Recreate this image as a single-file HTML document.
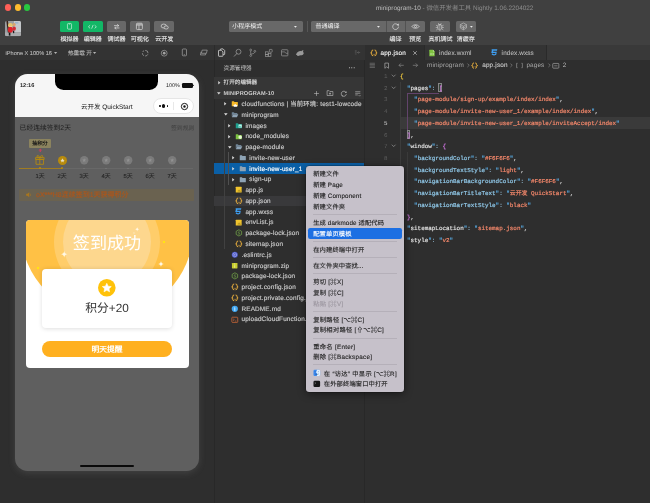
<!DOCTYPE html>
<html lang="zh-CN">
<head>
<meta charset="utf-8">
<title>miniprogram-10 - 微信开发者工具 Nightly 1.06.2204022</title>
<style>
html,body{margin:0;padding:0}
body{width:650px;height:503px;overflow:hidden;position:relative;background:#2e2e2e;font-family:"Liberation Sans",sans-serif;text-rendering:geometricPrecision;-webkit-font-smoothing:antialiased}
.a{position:absolute}
.t{position:absolute;white-space:pre;line-height:12px;height:12px}
svg{overflow:visible}
.k{color:#dedede}.k2{color:#8fc6e6}.q{color:#58abe4}.s{color:#f0866a}.p{color:#c8c8c8}.c{color:#8fb4cc}.b1{color:#ecc63e}.b2{color:#cc74dc}
.code{-webkit-text-stroke:0.22px currentColor}
</style>
</head>
<body>
<div id="root" class="a" style="left:0;top:0;width:650px;height:503px;overflow:hidden;will-change:transform">

<div class="a" style="left:0.00px;top:0.00px;width:650.00px;height:45.00px;background:#404040;"></div>
<div class="a" style="left:4.50px;top:4.35px;width:6.20px;height:6.20px;background:#fe5f57;border-radius:3.1px;"></div>
<div class="a" style="left:14.50px;top:4.35px;width:6.20px;height:6.20px;background:#febc2e;border-radius:3.1px;"></div>
<div class="a" style="left:24.30px;top:4.35px;width:6.20px;height:6.20px;background:#28c840;border-radius:3.1px;"></div>
<div class="t" style="left:376px;top:2.9px;font-size:6.4px;color:#8c8c8c"><span style="color:#bcbcbc">miniprogram-10</span> - 微信开发者工具 Nightly 1.06.2204022</div>
<svg class="a" style="left:5.4px;top:20.9px" width="16" height="15.2" viewBox="0 0 16 15.2">
<defs><clipPath id="av"><rect x="0" y="0" width="16" height="15.2" rx="1.6"/></clipPath><filter id="bl"><feGaussianBlur stdDeviation="0.45"/></filter></defs>
<g clip-path="url(#av)"><rect width="16" height="15.2" fill="#9b9ea1"/><rect x="9" width="7" height="11" fill="#c4c7ca"/><rect y="11.5" width="16" height="3.7" fill="#a9abad"/>
<g filter="url(#bl)"><path d="M1.4 0 H3 L4.2 11.4 H2.8 Z" fill="#3a2418"/><ellipse cx="5.4" cy="4.3" rx="2.4" ry="2.2" fill="#e9c46a"/><ellipse cx="9.2" cy="3.4" rx="1.5" ry="1.5" fill="#d8a46e"/><ellipse cx="5.6" cy="6" rx="1.2" ry="0.7" fill="#f6f0e4"/><rect x="10" y="1" width="3.4" height="1.6" fill="#9db4cc"/>
<ellipse cx="5.4" cy="8.8" rx="2.5" ry="3" fill="#e0202c"/><ellipse cx="9.3" cy="7.6" rx="1.6" ry="2.2" fill="#d42a32"/><rect x="3.8" y="11.6" width="1.6" height="3" fill="#141414"/><rect x="8" y="9.8" width="1.2" height="2.4" fill="#1c1c1c"/></g></g></svg>
<div class="a" style="left:59.60px;top:21.00px;width:19.60px;height:10.60px;background:#12b766;border-radius:1.6px;"></div>
<div class="t" style="top:33.70px;font-size:6px;color:#ececec;left:69.40px;transform:translateX(-50%);-webkit-text-stroke:0.1px;">模拟器</div>
<div class="a" style="left:83.00px;top:21.00px;width:19.60px;height:10.60px;background:#12b766;border-radius:1.6px;"></div>
<div class="t" style="top:33.70px;font-size:6px;color:#ececec;left:92.80px;transform:translateX(-50%);-webkit-text-stroke:0.1px;">编辑器</div>
<div class="a" style="left:106.60px;top:21.00px;width:19.60px;height:10.60px;background:#686868;border-radius:1.6px;"></div>
<div class="t" style="top:33.70px;font-size:6px;color:#ececec;left:116.40px;transform:translateX(-50%);-webkit-text-stroke:0.1px;">调试器</div>
<div class="a" style="left:130.00px;top:21.00px;width:19.60px;height:10.60px;background:#686868;border-radius:1.6px;"></div>
<div class="t" style="top:33.70px;font-size:6px;color:#ececec;left:139.80px;transform:translateX(-50%);-webkit-text-stroke:0.1px;">可视化</div>
<div class="a" style="left:154.40px;top:21.00px;width:19.60px;height:10.60px;background:#686868;border-radius:1.6px;"></div>
<div class="t" style="top:33.70px;font-size:6px;color:#ececec;left:164.20px;transform:translateX(-50%);-webkit-text-stroke:0.1px;">云开发</div>
<svg class="a" style="left:66.90px;top:23.00px" width="5" height="6.6" viewBox="0 0 10 13.2"><rect x="0.9" y="0.9" width="8.2" height="11.4" rx="2" fill="none" stroke="rgba(255,255,255,0.82)" stroke-width="1.35"/><path d="M3.6 2.6 H6.4" stroke="rgba(255,255,255,0.8)" stroke-width="1"/></svg>
<svg class="a" style="left:88.40px;top:24.50px" width="8.8" height="3.6" viewBox="0 0 20 8"><path d="M4.2 1 L1 4 L4.2 7 M15.8 1 L19 4 L15.8 7 M11.4 0.6 L8.6 7.4" fill="none" stroke="rgba(255,255,255,0.9)" stroke-width="1.5" stroke-linecap="round" stroke-linejoin="round"/></svg>
<svg class="a" style="left:112.65px;top:22.55px;" width="7.5" height="7.5" viewBox="0 0 16 16"><path d="M3 5.6 H12 M9.6 3.2 L12.2 5.6 L9.6 8 M13 10.6 H4 M6.4 8.2 L3.8 10.6 L6.4 13" fill="none" stroke="#e6e6e6" stroke-width="1.4" stroke-linecap="round" stroke-linejoin="round"/></svg>
<svg class="a" style="left:135.40px;top:21.90px;" width="8.8" height="8.8" viewBox="0 0 16 16"><rect x="2.6" y="2.2" width="10.8" height="11.6" rx="1.8" fill="none" stroke="#e2e2e2" stroke-width="1.25"/><path d="M2.6 5.6 H13.4 M7.2 5.6 V13.8" stroke="#e2e2e2" stroke-width="1.2"/><path d="M3.2 3 H12.8 V5 H3.2 Z" fill="rgba(226,226,226,0.55)"/></svg>
<svg class="a" style="left:159.50px;top:21.80px;" width="9.4" height="9.4" viewBox="0 0 16 16"><ellipse cx="6.4" cy="6.9" rx="4.5" ry="3.4" fill="none" stroke="#e2e2e2" stroke-width="1.15"/><ellipse cx="10.5" cy="9.3" rx="3.6" ry="2.7" fill="#686868" stroke="#e2e2e2" stroke-width="1.15"/></svg>
<div class="a" style="left:228.60px;top:21.00px;width:74.40px;height:10.60px;background:#686868;border-radius:1.6px;"></div>
<div class="t" style="top:21.40px;font-size:6px;color:#f2f2f2;left:232.20px;">小程序模式</div>
<svg class="a" style="left:293.95px;top:25.65px" width="2.9" height="1.9" viewBox="0 0 10 6"><path d="M0 0 H10 L5 6 Z" fill="#eaeaea"/></svg>
<div class="a" style="left:307.20px;top:21.00px;width:0.60px;height:10.60px;background:#575757;"></div>
<div class="a" style="left:311.00px;top:21.00px;width:114.00px;height:10.60px;background:#686868;border-radius:1.6px;"></div>
<div class="a" style="left:386.00px;top:21.00px;width:0.60px;height:10.60px;background:#525252;"></div>
<div class="a" style="left:405.20px;top:21.00px;width:0.60px;height:10.60px;background:#525252;"></div>
<div class="t" style="top:21.40px;font-size:6px;color:#f2f2f2;left:315.60px;">普通编译</div>
<svg class="a" style="left:376.55px;top:25.65px" width="2.9" height="1.9" viewBox="0 0 10 6"><path d="M0 0 H10 L5 6 Z" fill="#eaeaea"/></svg>
<svg class="a" style="left:391.20px;top:21.80px;" width="9.2" height="9.2" viewBox="0 0 16 16"><path d="M12.3 5.3 A5.1 5.1 0 1 0 13.1 8.6" fill="none" stroke="#e4e4e4" stroke-width="1.1" stroke-linecap="round"/><path d="M13.6 2.6 L13.2 6.4 L9.8 5.2 Z" fill="#e4e4e4"/></svg>
<svg class="a" style="left:410.90px;top:21.80px;" width="9" height="9" viewBox="0 0 16 16"><path d="M1.6 8 C4 4 12 4 14.4 8 C12 12 4 12 1.6 8 Z" fill="none" stroke="#e6e6e6" stroke-width="1.2"/><circle cx="8" cy="8" r="1.9" fill="none" stroke="#e6e6e6" stroke-width="1.2"/></svg>
<div class="t" style="top:33.70px;font-size:6px;color:#ececec;left:395.40px;transform:translateX(-50%);-webkit-text-stroke:0.1px;">编译</div>
<div class="t" style="top:33.70px;font-size:6px;color:#ececec;left:415.20px;transform:translateX(-50%);-webkit-text-stroke:0.1px;">预览</div>
<div class="a" style="left:430.40px;top:21.00px;width:19.60px;height:10.60px;background:#686868;border-radius:1.6px;"></div>
<div class="a" style="left:456.00px;top:21.00px;width:19.60px;height:10.60px;background:#686868;border-radius:1.6px;"></div>
<svg class="a" style="left:435.40px;top:21.50px;" width="9.6" height="9.6" viewBox="0 0 16 16"><path d="M8 4.2 C10.4 4.2 11.4 6 11.4 8.6 C11.4 11.6 10 13.4 8 13.4 C6 13.4 4.6 11.6 4.6 8.6 C4.6 6 5.6 4.2 8 4.2 Z" fill="none" stroke="#d2d2d2" stroke-width="0.95"/><path d="M8 4.4 V13.2 M6 4.6 Q8 6 10 4.6 M5.8 2.4 L6.9 4.1 M10.2 2.4 L9.1 4.1 M2.2 5.6 L4.8 7 M13.8 5.6 L11.2 7 M1.8 9.2 H4.6 M14.2 9.2 H11.4 M2.6 13 L5 11.2 M13.4 13 L11 11.2" stroke="#d2d2d2" stroke-width="0.9" fill="none" stroke-linecap="round"/></svg>
<svg class="a" style="left:459.20px;top:21.90px;" width="8.8" height="8.8" viewBox="0 0 16 16"><path d="M8 1.8 L13.6 4.8 L8 7.8 L2.4 4.8 Z" fill="none" stroke="#d2d2d2" stroke-width="0.95" stroke-linejoin="round"/><path d="M2.4 4.8 V11 L8 14.2 L13.6 11 V4.8 M2.4 8 L8 11 L13.6 8 M8 7.8 V14.2" fill="none" stroke="#d2d2d2" stroke-width="0.95" stroke-linejoin="round"/></svg>
<svg class="a" style="left:469.60px;top:25.60px" width="2.8" height="1.8" viewBox="0 0 10 6"><path d="M0 0 H10 L5 6 Z" fill="#eaeaea"/></svg>
<div class="t" style="top:33.70px;font-size:6px;color:#ececec;left:440.40px;transform:translateX(-50%);-webkit-text-stroke:0.1px;">真机调试</div>
<div class="t" style="top:33.70px;font-size:6px;color:#ececec;left:465.80px;transform:translateX(-50%);-webkit-text-stroke:0.1px;">清缓存</div>
<div class="a" style="left:0.00px;top:45.00px;width:365.00px;height:14.60px;background:#333333;"></div>
<div class="a" style="left:365.00px;top:45.00px;width:285.00px;height:14.60px;background:#393939;"></div>
<div class="t" style="top:47.50px;font-size:5.6px;color:#bababa;left:5.60px;-webkit-text-stroke:0.1px;">iPhone X 100% 16</div>
<svg class="a" style="left:53.60px;top:51.95px" width="3.2" height="2.1" viewBox="0 0 10 6"><path d="M0 0 H10 L5 6 Z" fill="#b4b4b4"/></svg>
<div class="t" style="top:47.50px;font-size:5.6px;color:#bababa;left:68.00px;-webkit-text-stroke:0.1px;">热重载 开</div>
<svg class="a" style="left:92.80px;top:51.95px" width="3.2" height="2.1" viewBox="0 0 10 6"><path d="M0 0 H10 L5 6 Z" fill="#b4b4b4"/></svg>
<svg class="a" style="left:140.80px;top:48.60px;" width="8.4" height="8.4" viewBox="0 0 16 16"><path d="M8 2.6 A5.4 5.4 0 0 1 13.4 8 M13 10.2 A5.4 5.4 0 0 1 8 13.4 M5.6 12.8 A5.4 5.4 0 0 1 2.6 8 M3.2 5.6 A5.4 5.4 0 0 1 5.8 3.1" fill="none" stroke="#a4a4a4" stroke-width="1.4"/></svg>
<svg class="a" style="left:160.40px;top:48.60px;" width="8.4" height="8.4" viewBox="0 0 16 16"><circle cx="8" cy="8" r="5.6" fill="none" stroke="#a4a4a4" stroke-width="1.3"/><circle cx="8" cy="8" r="2.6" fill="#a4a4a4"/></svg>
<svg class="a" style="left:179.80px;top:48.40px;" width="8.8" height="8.8" viewBox="0 0 16 16"><rect x="4.2" y="1.8" width="7.6" height="12.4" rx="1.6" fill="none" stroke="#a4a4a4" stroke-width="1.3"/><path d="M6.8 12 H9.2" stroke="#a4a4a4" stroke-width="1"/></svg>
<svg class="a" style="left:199.10px;top:48.10px;" width="9.4" height="9.4" viewBox="0 0 16 16"><path d="M5.4 3.6 H14 L12.6 9 H4 Z" fill="none" stroke="#a4a4a4" stroke-width="1.2" stroke-linejoin="round"/><path d="M3.6 6.4 L2.4 11.8 H11 L11.6 9.2" fill="none" stroke="#a4a4a4" stroke-width="1.2" stroke-linejoin="round"/></svg>
<div class="a" style="left:213.70px;top:59.60px;width:0.70px;height:444.00px;background:#282828;"></div>
<div class="a" style="left:213.70px;top:45.00px;width:0.70px;height:14.60px;background:#2b2b2b;"></div>
<svg class="a" style="left:217.00px;top:48.00px;" width="9.2" height="9.2" viewBox="0 0 16 16"><path d="M6 3.6 V2.4 Q6 1.6 6.8 1.6 H10.6 L13.4 4.4 V10.6 Q13.4 11.4 12.6 11.4 H10.8" fill="none" stroke="#e4e4e4" stroke-width="1.3" stroke-linejoin="round"/><path d="M3.4 4 H7.6 L10.4 6.8 V13.6 Q10.4 14.4 9.6 14.4 H3.4 Q2.6 14.4 2.6 13.6 V4.8 Q2.6 4 3.4 4 Z" fill="none" stroke="#e4e4e4" stroke-width="1.3" stroke-linejoin="round"/></svg>
<svg class="a" style="left:233.10px;top:47.70px;" width="9.4" height="9.4" viewBox="0 0 16 16"><circle cx="9.4" cy="6.4" r="4.2" fill="none" stroke="#9a9a9a" stroke-width="1.3"/><path d="M6.4 9.6 L2.2 14" stroke="#9a9a9a" stroke-width="1.4" stroke-linecap="round"/></svg>
<svg class="a" style="left:248.20px;top:47.70px;" width="9.4" height="9.4" viewBox="0 0 16 16"><circle cx="4.6" cy="3.4" r="1.6" fill="none" stroke="#9a9a9a" stroke-width="1.1"/><circle cx="4.6" cy="12.8" r="1.6" fill="none" stroke="#9a9a9a" stroke-width="1.1"/><circle cx="11.6" cy="5.6" r="1.6" fill="none" stroke="#9a9a9a" stroke-width="1.1"/><path d="M4.6 5 V11.2 M11.6 7.2 Q11.6 9.6 4.8 10.6" fill="none" stroke="#9a9a9a" stroke-width="1.1"/></svg>
<svg class="a" style="left:263.70px;top:47.60px;" width="9.6" height="9.6" viewBox="0 0 16 16"><rect x="2.4" y="6.4" width="4.6" height="4.6" fill="none" stroke="#9a9a9a" stroke-width="1.1"/><rect x="2.4" y="11" width="4.6" height="3" fill="none" stroke="#9a9a9a" stroke-width="1.1"/><rect x="7" y="9.4" width="4.6" height="4.6" fill="none" stroke="#9a9a9a" stroke-width="1.1"/><rect x="9" y="2.4" width="4.6" height="4.6" rx="0.6" fill="none" stroke="#9a9a9a" stroke-width="1.1"/></svg>
<svg class="a" style="left:280.30px;top:47.70px;" width="9.4" height="9.4" viewBox="0 0 16 16"><rect x="2.6" y="3" width="10.8" height="10.4" rx="1" fill="none" stroke="#9a9a9a" stroke-width="1.2"/><path d="M2.6 6.6 H8 L10 9 H13.4" fill="none" stroke="#9a9a9a" stroke-width="1.1"/></svg>
<svg class="a" style="left:295.00px;top:47.60px;" width="10" height="10" viewBox="0 0 16 16"><path d="M1.6 10.6 C3 6.6 6.4 4.4 10 5 C11 3.6 12.6 3.2 13.8 3.6 C12.8 4.4 12.6 5.4 13 6.4 C14.4 7.6 14.2 9.8 12.6 10.6 C10.6 11.8 7.6 11.2 6 12.4 C4.6 13.2 3 12.6 3.6 11.2 C2.8 11.4 2 11.2 1.6 10.6 Z" fill="#9a9a9a"/></svg>
<svg class="a" style="left:353.50px;top:49.10px;" width="7" height="7" viewBox="0 0 16 16"><path d="M3 2.4 V13.6 M5 2.4 V13.6" stroke="#777" stroke-width="1" stroke-dasharray="1.6 1"/><path d="M8 8 H14 M10.4 5.6 L8 8 L10.4 10.4" fill="none" stroke="#777" stroke-width="1.1"/></svg>
<div class="a" style="left:364.30px;top:59.60px;width:0.70px;height:444.00px;background:#282828;"></div>
<div class="a" style="left:365.20px;top:45.00px;width:58.80px;height:14.60px;background:#2e2e2e;"></div>
<div class="a" style="left:424.00px;top:45.00px;width:0.60px;height:14.60px;background:#2a2a2a;"></div>
<div class="a" style="left:424.60px;top:45.00px;width:61.00px;height:14.60px;background:#343434;"></div>
<div class="a" style="left:485.60px;top:45.00px;width:0.60px;height:14.60px;background:#2a2a2a;"></div>
<div class="a" style="left:486.20px;top:45.00px;width:60.20px;height:14.60px;background:#343434;"></div>
<div class="a" style="left:546.40px;top:45.00px;width:0.60px;height:14.60px;background:#2a2a2a;"></div>
<svg class="a" style="left:369.70px;top:48.70px;" width="7.8" height="7.8" viewBox="0 0 16 16"><path d="M5.8 2.2 Q3.6 2.2 3.6 4.2 V6 Q3.6 8 1.4 8 Q3.6 8 3.6 10 V11.8 Q3.6 13.8 5.8 13.8 M10.2 2.2 Q12.4 2.2 12.4 4.2 V6 Q12.4 8 14.6 8 Q12.4 8 12.4 10 V11.8 Q12.4 13.8 10.2 13.8" fill="none" stroke="#f2b53f" stroke-width="2" stroke-linecap="round" stroke-linejoin="round"/><circle cx="6.6" cy="10.6" r="0.95" fill="#f2b53f"/><circle cx="9.4" cy="10.6" r="0.95" fill="#f2b53f"/></svg>
<div class="t" style="top:47.50px;font-size:6.36px;color:#f4f4f4;letter-spacing:0.2px;left:380.40px;-webkit-text-stroke:0.12px;">app.json</div>
<svg class="a" style="left:412.40px;top:49.60px;" width="6" height="6" viewBox="0 0 16 16"><path d="M4 4 L12 12 M12 4 L4 12" stroke="#e0e0e0" stroke-width="1.5" stroke-linecap="round"/></svg>
<svg class="a" style="left:428.10px;top:48.50px;" width="8.2" height="8.2" viewBox="0 0 16 16"><path d="M3.4 1.6 H9.6 L13 5 V13.4 Q13 14.4 12 14.4 H3.4 Q2.6 14.4 2.6 13.4 V2.6 Q2.6 1.6 3.4 1.6 Z" fill="#7fc241"/><path d="M9.6 1.6 V5 H13 Z" fill="#c7e9a0"/><path d="M6.6 8 L5 9.8 L6.6 11.6 M9.4 8 L11 9.8 L9.4 11.6" fill="none" stroke="#fff" stroke-width="1.1"/></svg>
<div class="t" style="top:47.50px;font-size:6.36px;color:#b6b6b6;letter-spacing:0.12px;left:439.00px;-webkit-text-stroke:0.1px;">index.wxml</div>
<svg class="a" style="left:489.80px;top:48.20px;" width="8.8" height="8.8" viewBox="0 0 16 16"><path d="M3.2 2 H13.6 L13 4.6 H6.4 L6 6.4 H12.6 L11.6 11.8 L7.6 13.4 L3.4 11.8 L3.8 9.6 H6 L5.8 10.4 L7.8 11.2 L9.8 10.4 L10.2 8.6 H2.6 L3.6 4.2 Z" fill="#3f9ef0" transform="translate(-0.3 0.3)"/></svg>
<div class="t" style="top:47.50px;font-size:6.36px;color:#b6b6b6;letter-spacing:0.12px;left:501.60px;-webkit-text-stroke:0.1px;">index.wxss</div>
<div class="a" style="left:15.0px;top:74.0px;width:183.6px;height:397.0px;border-radius:12.5px;background:#5f5f5f;overflow:hidden;box-shadow:0 2px 7px rgba(150,150,150,0.2)">
<div class="a" style="left:0.00px;top:0.00px;width:183.60px;height:43.00px;background:#f6f6f6;"></div>
<div class="a" style="left:40.0px;top:-4px;width:103px;height:20px;background:#000;border-radius:0 0 8.5px 8.5px"></div>
<div class="t" style="top:6.10px;font-size:5.6px;color:#1a1a1a;font-weight:700;left:5.00px;">12:16</div>
<div class="t" style="top:6.30px;font-size:5.4px;color:#1a1a1a;left:151.00px;">100%</div>
<div class="a" style="left:167.00px;top:9.20px;width:10.60px;height:4.60px;background:#111;border-radius:1.2px;"></div>
<div class="a" style="left:177.80px;top:10.60px;width:1.00px;height:1.80px;background:#111;border-radius:0.5px;"></div>
<div class="t" style="top:27.50px;font-size:6.5px;color:#151515;left:91.80px;transform:translateX(-50%);">云开发 QuickStart</div>
<div class="a" style="left:138.0px;top:24.0px;width:41px;height:16px;box-sizing:border-box;border:0.6px solid #e6e6e6;border-radius:8px;background:#fff"></div>
<div class="a" style="left:144.20px;top:31.30px;width:1.60px;height:1.60px;background:#111;border-radius:0.8px;"></div>
<div class="a" style="left:147.10px;top:30.40px;width:3.20px;height:3.20px;background:#111;border-radius:1.6px;"></div>
<div class="a" style="left:151.60px;top:31.30px;width:1.60px;height:1.60px;background:#111;border-radius:0.8px;"></div>
<svg class="a" style="left:164.50px;top:27.50px;" width="9" height="9" viewBox="0 0 16 16"><circle cx="8" cy="8" r="5.6" fill="none" stroke="#111" stroke-width="1.7"/><circle cx="8" cy="8" r="2.1" fill="#111"/></svg>
<div class="a" style="left:158.40px;top:28.00px;width:0.40px;height:8.00px;background:#e8e8e8;"></div>
<div class="t" style="top:48.90px;font-size:6.8px;color:#1c1c1c;font-weight:500;left:4.60px;">已经连续签到2天</div>
<div class="t" style="top:48.90px;font-size:5.85px;color:#3d3d3d;left:156.00px;">签到规则</div>
<div class="a" style="left:14.00px;top:65.00px;width:22.00px;height:8.60px;background:#8b835e;border-radius:1px;"></div>
<div class="t" style="top:64.20px;font-size:5.2px;color:#161616;font-weight:700;left:25.00px;transform:translateX(-50%);">抽积分</div>
<svg class="a" style="left:22.70px;top:73.50px;" width="4.6" height="4.6" viewBox="0 0 16 16"><path d="M8 1.5 L14.5 8.5 H10.4 V14 H5.6 V8.5 H1.5 Z" fill="#c2405c"/></svg>
<svg class="a" style="left:19.20px;top:79.80px;" width="11.6" height="11.6" viewBox="0 0 16 16"><path d="M2.8 7.4 H13.2 V14.2 H2.8 Z M2 5 H14 V7.4 H2 Z M8 5 V14.2 M8 4.8 C6.6 1 2.8 1.8 4.2 3.8 Q5.4 5 8 4.8 C9.4 1 13.2 1.8 11.8 3.8 Q10.6 5 8 4.8" fill="none" stroke="#b88b0c" stroke-width="1.15" stroke-linejoin="round"/></svg>
<svg class="a" style="left:42.50px;top:81.50px;" width="9" height="9" viewBox="0 0 16 16"><circle cx="8" cy="8" r="8" fill="#b88b0c"/><path d="M8 4.2 L9.1 6.7 L11.8 6.9 L9.7 8.7 L10.4 11.4 L8 9.9 L5.6 11.4 L6.3 8.7 L4.2 6.9 L6.9 6.7 Z" fill="#e8e0c8"/></svg>
<svg class="a" style="left:64.80px;top:81.80px;" width="8.4" height="8.4" viewBox="0 0 16 16"><circle cx="8" cy="8" r="8" fill="#7b7b7b"/><path d="M8 4.2 L9.1 6.7 L11.8 6.9 L9.7 8.7 L10.4 11.4 L8 9.9 L5.6 11.4 L6.3 8.7 L4.2 6.9 L6.9 6.7 Z" fill="#929292"/></svg>
<svg class="a" style="left:86.80px;top:81.80px;" width="8.4" height="8.4" viewBox="0 0 16 16"><circle cx="8" cy="8" r="8" fill="#7b7b7b"/><path d="M8 4.2 L9.1 6.7 L11.8 6.9 L9.7 8.7 L10.4 11.4 L8 9.9 L5.6 11.4 L6.3 8.7 L4.2 6.9 L6.9 6.7 Z" fill="#929292"/></svg>
<svg class="a" style="left:108.80px;top:81.80px;" width="8.4" height="8.4" viewBox="0 0 16 16"><circle cx="8" cy="8" r="8" fill="#7b7b7b"/><path d="M8 4.2 L9.1 6.7 L11.8 6.9 L9.7 8.7 L10.4 11.4 L8 9.9 L5.6 11.4 L6.3 8.7 L4.2 6.9 L6.9 6.7 Z" fill="#929292"/></svg>
<svg class="a" style="left:130.80px;top:81.80px;" width="8.4" height="8.4" viewBox="0 0 16 16"><circle cx="8" cy="8" r="8" fill="#7b7b7b"/><path d="M8 4.2 L9.1 6.7 L11.8 6.9 L9.7 8.7 L10.4 11.4 L8 9.9 L5.6 11.4 L6.3 8.7 L4.2 6.9 L6.9 6.7 Z" fill="#929292"/></svg>
<svg class="a" style="left:152.80px;top:81.80px;" width="8.4" height="8.4" viewBox="0 0 16 16"><circle cx="8" cy="8" r="8" fill="#7b7b7b"/><path d="M8 4.2 L9.1 6.7 L11.8 6.9 L9.7 8.7 L10.4 11.4 L8 9.9 L5.6 11.4 L6.3 8.7 L4.2 6.9 L6.9 6.7 Z" fill="#929292"/></svg>
<div class="a" style="left:4.00px;top:94.00px;width:43.00px;height:1.00px;background:#a07c22;"></div>
<div class="a" style="left:47.00px;top:94.00px;width:130.60px;height:1.00px;background:#686868;"></div>
<div class="a" style="left:23.90px;top:93.30px;width:2.20px;height:2.20px;background:#b88b0c;border-radius:1.1px;"></div>
<div class="a" style="left:45.90px;top:93.30px;width:2.20px;height:2.20px;background:#b88b0c;border-radius:1.1px;"></div>
<div class="a" style="left:68.20px;top:93.60px;width:1.60px;height:1.60px;background:#757575;border-radius:0.8px;"></div>
<div class="a" style="left:90.20px;top:93.60px;width:1.60px;height:1.60px;background:#757575;border-radius:0.8px;"></div>
<div class="a" style="left:112.20px;top:93.60px;width:1.60px;height:1.60px;background:#757575;border-radius:0.8px;"></div>
<div class="a" style="left:134.20px;top:93.60px;width:1.60px;height:1.60px;background:#757575;border-radius:0.8px;"></div>
<div class="a" style="left:156.20px;top:93.60px;width:1.60px;height:1.60px;background:#757575;border-radius:0.8px;"></div>
<div class="t" style="top:96.90px;font-size:5.9px;color:#252525;left:25.00px;transform:translateX(-50%);-webkit-text-stroke:0.12px;">1天</div>
<div class="t" style="top:96.90px;font-size:5.9px;color:#252525;left:47.00px;transform:translateX(-50%);-webkit-text-stroke:0.12px;">2天</div>
<div class="t" style="top:96.90px;font-size:5.9px;color:#252525;left:69.00px;transform:translateX(-50%);-webkit-text-stroke:0.12px;">3天</div>
<div class="t" style="top:96.90px;font-size:5.9px;color:#252525;left:91.00px;transform:translateX(-50%);-webkit-text-stroke:0.12px;">4天</div>
<div class="t" style="top:96.90px;font-size:5.9px;color:#252525;left:113.00px;transform:translateX(-50%);-webkit-text-stroke:0.12px;">5天</div>
<div class="t" style="top:96.90px;font-size:5.9px;color:#252525;left:135.00px;transform:translateX(-50%);-webkit-text-stroke:0.12px;">6天</div>
<div class="t" style="top:96.90px;font-size:5.9px;color:#252525;left:157.00px;transform:translateX(-50%);-webkit-text-stroke:0.12px;">7天</div>
<div class="a" style="left:4.00px;top:114.60px;width:175.40px;height:12.00px;background:#6a6250;border-radius:0.8px;"></div>
<svg class="a" style="left:10.40px;top:116.80px;" width="7.6" height="7.6" viewBox="0 0 16 16"><path d="M2.4 6 H5 L9 2.8 V13.2 L5 10 H2.4 Z" fill="#a8761e"/><path d="M11 5.4 Q13 8 11 10.6" fill="none" stroke="#a8761e" stroke-width="1.2"/></svg>
<div class="t" style="top:116.10px;font-size:7px;color:#ae561a;left:21.00px;-webkit-text-stroke:0.15px;">oX***H8连续签到1天获得积分</div>
<div class="a" style="left:10.600000000000001px;top:146.0px;width:163.0px;height:147.6px;border-radius:4px;background:#fff;overflow:hidden">
<div class="a" style="left:-4.20px;top:-75.00px;width:171.20px;height:171.20px;background:#ffc145;border-radius:85.6px;"></div>
<div class="a" style="left:28.40px;top:-31.00px;width:106.00px;height:106.00px;background:#ffcd6a;border-radius:53px;"></div>
<div class="a" style="left:37.40px;top:-22.00px;width:88.00px;height:88.00px;background:#fdd78e;border-radius:44px;"></div>
<div class="t" style="top:18.10px;font-size:17.1px;color:#ffffff;font-weight:500;left:81.40px;transform:translateX(-50%);line-height:22px;height:22px;margin-top:-5px;">签到成功</div>
<svg class="a" style="left:35.20px;top:31.40px;" width="6.4" height="6.4" viewBox="0 0 16 16"><path d="M8 0 C8.6 5 11 7.4 16 8 C11 8.6 8.6 11 8 16 C7.4 11 5 8.6 0 8 C5 7.4 7.4 5 8 0 Z" fill="#fff8e6"/></svg>
<svg class="a" style="left:109.80px;top:6.80px;" width="4.4" height="4.4" viewBox="0 0 16 16"><path d="M8 0 C8.6 5 11 7.4 16 8 C11 8.6 8.6 11 8 16 C7.4 11 5 8.6 0 8 C5 7.4 7.4 5 8 0 Z" fill="#fff8e6"/></svg>
<svg class="a" style="left:107.40px;top:12.20px;" width="2" height="2" viewBox="0 0 16 16"><path d="M8 0 C8.6 5 11 7.4 16 8 C11 8.6 8.6 11 8 16 C7.4 11 5 8.6 0 8 C5 7.4 7.4 5 8 0 Z" fill="#fff3d6"/></svg>
<svg class="a" style="left:132.00px;top:40.60px;" width="6" height="6" viewBox="0 0 16 16"><path d="M8 0 C8.6 5 11 7.4 16 8 C11 8.6 8.6 11 8 16 C7.4 11 5 8.6 0 8 C5 7.4 7.4 5 8 0 Z" fill="#fff8e6"/></svg>
<div class="a" style="left:11.20px;top:46.80px;width:2.30px;height:2.30px;background:#fff000;border-radius:1.15px;"></div>
<div class="a" style="left:137.30px;top:20.50px;width:2.30px;height:2.30px;background:#fff000;border-radius:1.15px;"></div>
<div class="a" style="left:16.80px;top:49.00px;width:129.20px;height:58.60px;background:#fff;border-radius:4px;box-shadow:0 0.8px 4px rgba(0,0,0,0.13);"></div>
<svg class="a" style="left:72.60px;top:58.80px;" width="17.6" height="17.6" viewBox="0 0 16 16"><circle cx="8" cy="8" r="8" fill="#ffc20a"/><path d="M8 3.9 L9.25 6.55 L12.1 6.9 L10 8.85 L10.55 11.7 L8 10.3 L5.45 11.7 L6 8.85 L3.9 6.9 L6.75 6.55 Z" fill="#fff" stroke="#fff" stroke-width="0.5" stroke-linejoin="round"/></svg>
<div class="t" style="top:81.90px;font-size:11.8px;color:#333;left:81.40px;transform:translateX(-50%);line-height:16px;height:16px;margin-top:-2px;">积分+20</div>
<div class="a" style="left:16.40px;top:120.60px;width:129.60px;height:16.40px;background:#ffb01f;border-radius:8.2px;"></div>
<div class="t" style="top:123.90px;font-size:7.8px;color:#fff;font-weight:700;left:81.40px;transform:translateX(-50%);">明天提醒</div>
</div>
<div class="a" style="left:64.60px;top:390.80px;width:54.20px;height:2.00px;background:#0a0a0a;border-radius:1px;"></div>
</div>
<div class="t" style="top:62.90px;font-size:5.6px;color:#cbcbcb;left:223.60px;">资源管理器</div>
<div class="t" style="top:63.10px;font-size:7px;color:#b0b0b0;font-weight:700;left:352.00px;transform:translateX(-50%);">···</div>
<div class="a" style="left:214.40px;top:77.00px;width:150.00px;height:10.60px;background:#363636;"></div>
<div class="a" style="left:214.40px;top:87.60px;width:150.00px;height:0.50px;background:#2a2a2a;"></div>
<div class="a" style="left:214.40px;top:88.10px;width:150.00px;height:10.60px;background:#363636;"></div>
<svg class="a" style="left:217.90px;top:80.50px" width="2.60" height="3.60" viewBox="0 0 6 10"><path d="M0 0 L6 5 L0 10 Z" fill="#d6d6d6"/></svg>
<div class="t" style="top:77.30px;font-size:5.6px;color:#cfcfcf;font-weight:700;left:223.60px;">打开的编辑器</div>
<svg class="a" style="left:217.40px;top:92.10px" width="3.60" height="2.60" viewBox="0 0 10 6"><path d="M0 0 H10 L5 6 Z" fill="#d6d6d6"/></svg>
<div class="t" style="top:88.40px;font-size:5.6px;color:#cfcfcf;font-weight:700;letter-spacing:0.1px;left:223.60px;">MINIPROGRAM-10</div>
<svg class="a" style="left:313.10px;top:89.90px;" width="7" height="7" viewBox="0 0 16 16"><path d="M8 2.4 V13.6 M2.4 8 H13.6" stroke="#c2c2c2" stroke-width="1.3"/></svg>
<svg class="a" style="left:326.00px;top:89.40px;" width="8" height="8" viewBox="0 0 16 16"><path d="M2.2 3.4 H6.4 L7.8 5 H13.8 V13 H2.2 Z" fill="none" stroke="#c2c2c2" stroke-width="1.2" stroke-linejoin="round"/><path d="M8 7 V11.4 M5.8 9.2 H10.2" stroke="#c2c2c2" stroke-width="1.2"/></svg>
<svg class="a" style="left:340.20px;top:89.60px;" width="7.6" height="7.6" viewBox="0 0 16 16"><path d="M12.8 5.4 A5.4 5.4 0 1 0 13.4 8.6" fill="none" stroke="#c2c2c2" stroke-width="1.3"/><path d="M13.8 2.6 L13.4 6.2 L10 5.4 Z" fill="#c2c2c2"/><path d="M3.2 10.6 A5.4 5.4 0 0 0 6 13" fill="none" stroke="#c2c2c2" stroke-width="1.3"/></svg>
<svg class="a" style="left:353.80px;top:89.60px;" width="7.6" height="7.6" viewBox="0 0 16 16"><path d="M2.6 3.6 H13.4 M2.6 7 H13.4 M2.6 10.4 H8 M10 11 L11.8 13 L13.6 11" fill="none" stroke="#c2c2c2" stroke-width="1.2"/></svg>
<div class="a" style="left:214.40px;top:163.24px;width:150.00px;height:10.77px;background:#0a5fa6;"></div>
<div class="a" style="left:214.40px;top:195.55px;width:150.00px;height:10.77px;background:#39393b;"></div>
<div class="a" style="left:223.90px;top:120.16px;width:0.50px;height:129.24px;background:#414141;"></div>
<div class="a" style="left:227.80px;top:152.47px;width:0.50px;height:32.31px;background:#505050;"></div>
<svg class="a" style="left:224.30px;top:102.21px" width="2.60" height="3.60" viewBox="0 0 6 10"><path d="M0 0 L6 5 L0 10 Z" fill="#e0e0e0"/></svg>
<svg class="a" style="left:231.00px;top:100.21px;" width="7.6" height="7.6" viewBox="0 0 16 16"><path d="M1.6 3.4 Q1.6 2.6 2.4 2.6 H6 L7.4 4.2 H13.6 Q14.4 4.2 14.4 5 V12.6 Q14.4 13.4 13.6 13.4 H2.4 Q1.6 13.4 1.6 12.6 Z" fill="#f7b928"/></svg>
<svg class="a" style="left:233.40px;top:102.61px;" width="4.6" height="4.6" viewBox="0 0 16 16"><path d="M4 13 A3.4 3.4 0 0 1 4.2 6.4 A4.2 4.2 0 0 1 12 6.8 A3 3 0 0 1 12 13 Z" fill="#fff"/></svg>
<div class="t" style="top:99.01px;font-size:6.36px;color:#cccccc;letter-spacing:0.17px;left:241.50px;-webkit-text-stroke:0.15px;">cloudfunctions | 当前环境: test1-lowcode</div>
<svg class="a" style="left:223.80px;top:113.48px" width="3.60" height="2.60" viewBox="0 0 10 6"><path d="M0 0 H10 L5 6 Z" fill="#e0e0e0"/></svg>
<svg class="a" style="left:231.00px;top:110.98px;" width="7.6" height="7.6" viewBox="0 0 16 16"><path d="M1.6 3.4 Q1.6 2.6 2.4 2.6 H6 L7.4 4.2 H12.6 Q13.4 4.2 13.4 5 V6.2 H4.4 L1.6 12 Z" fill="#6f8496"/><path d="M4.4 6.8 H15.4 L12.6 13.4 H1.8 Z" fill="#8ea3b5"/></svg>
<div class="t" style="top:109.78px;font-size:6.36px;color:#cccccc;letter-spacing:0.17px;left:241.50px;-webkit-text-stroke:0.15px;">miniprogram</div>
<svg class="a" style="left:228.20px;top:123.75px" width="2.60" height="3.60" viewBox="0 0 6 10"><path d="M0 0 L6 5 L0 10 Z" fill="#e0e0e0"/></svg>
<svg class="a" style="left:234.90px;top:121.75px;" width="7.6" height="7.6" viewBox="0 0 16 16"><path d="M1.6 3.4 Q1.6 2.6 2.4 2.6 H6 L7.4 4.2 H13.6 Q14.4 4.2 14.4 5 V12.6 Q14.4 13.4 13.6 13.4 H2.4 Q1.6 13.4 1.6 12.6 Z" fill="#1f9e8e"/></svg>
<svg class="a" style="left:237.70px;top:124.34px;" width="4.4" height="4.4" viewBox="0 0 16 16"><rect x="2" y="2" width="12" height="12" rx="1.4" fill="#b8f0e4"/><path d="M3 12 L6.6 7.6 L9 10.4 L10.6 8.8 L13 12 Z" fill="#1f9e8e"/></svg>
<div class="t" style="top:120.55px;font-size:6.36px;color:#cccccc;letter-spacing:0.17px;left:245.40px;-webkit-text-stroke:0.15px;">images</div>
<svg class="a" style="left:228.20px;top:134.51px" width="2.60" height="3.60" viewBox="0 0 6 10"><path d="M0 0 L6 5 L0 10 Z" fill="#e0e0e0"/></svg>
<svg class="a" style="left:234.90px;top:132.51px;" width="7.6" height="7.6" viewBox="0 0 16 16"><path d="M1.6 3.4 Q1.6 2.6 2.4 2.6 H6 L7.4 4.2 H13.6 Q14.4 4.2 14.4 5 V12.6 Q14.4 13.4 13.6 13.4 H2.4 Q1.6 13.4 1.6 12.6 Z" fill="#7dc242"/></svg>
<svg class="a" style="left:238.00px;top:135.31px;" width="4.4" height="4.4" viewBox="0 0 16 16"><path d="M8 1 L14 4.6 V11.4 L8 15 L2 11.4 V4.6 Z" fill="#e8f7d6"/></svg>
<div class="t" style="top:131.31px;font-size:6.36px;color:#cccccc;letter-spacing:0.17px;left:245.40px;-webkit-text-stroke:0.15px;">node_modules</div>
<svg class="a" style="left:227.70px;top:145.78px" width="3.60" height="2.60" viewBox="0 0 10 6"><path d="M0 0 H10 L5 6 Z" fill="#e0e0e0"/></svg>
<svg class="a" style="left:234.90px;top:143.28px;" width="7.6" height="7.6" viewBox="0 0 16 16"><path d="M1.6 3.4 Q1.6 2.6 2.4 2.6 H6 L7.4 4.2 H12.6 Q13.4 4.2 13.4 5 V6.2 H4.4 L1.6 12 Z" fill="#6f8496"/><path d="M4.4 6.8 H15.4 L12.6 13.4 H1.8 Z" fill="#8ea3b5"/></svg>
<div class="t" style="top:142.08px;font-size:6.36px;color:#cccccc;letter-spacing:0.17px;left:245.40px;-webkit-text-stroke:0.15px;">page-module</div>
<svg class="a" style="left:232.10px;top:156.05px" width="2.60" height="3.60" viewBox="0 0 6 10"><path d="M0 0 L6 5 L0 10 Z" fill="#e0e0e0"/></svg>
<svg class="a" style="left:238.80px;top:154.05px;" width="7.6" height="7.6" viewBox="0 0 16 16"><path d="M1.6 3.4 Q1.6 2.6 2.4 2.6 H6 L7.4 4.2 H13.6 Q14.4 4.2 14.4 5 V12.6 Q14.4 13.4 13.6 13.4 H2.4 Q1.6 13.4 1.6 12.6 Z" fill="#8ea3b5"/></svg>
<div class="t" style="top:152.85px;font-size:6.36px;color:#cccccc;letter-spacing:0.17px;left:249.30px;-webkit-text-stroke:0.15px;">invite-new-user</div>
<svg class="a" style="left:232.10px;top:166.82px" width="2.60" height="3.60" viewBox="0 0 6 10"><path d="M0 0 L6 5 L0 10 Z" fill="#e0e0e0"/></svg>
<svg class="a" style="left:238.80px;top:164.82px;" width="7.6" height="7.6" viewBox="0 0 16 16"><path d="M1.6 3.4 Q1.6 2.6 2.4 2.6 H6 L7.4 4.2 H13.6 Q14.4 4.2 14.4 5 V12.6 Q14.4 13.4 13.6 13.4 H2.4 Q1.6 13.4 1.6 12.6 Z" fill="#8ea3b5"/></svg>
<div class="t" style="top:163.62px;font-size:6.36px;color:#ffffff;letter-spacing:0.17px;left:249.30px;-webkit-text-stroke:0.15px;">invite-new-user_1</div>
<svg class="a" style="left:232.10px;top:177.59px" width="2.60" height="3.60" viewBox="0 0 6 10"><path d="M0 0 L6 5 L0 10 Z" fill="#e0e0e0"/></svg>
<svg class="a" style="left:238.80px;top:175.59px;" width="7.6" height="7.6" viewBox="0 0 16 16"><path d="M1.6 3.4 Q1.6 2.6 2.4 2.6 H6 L7.4 4.2 H13.6 Q14.4 4.2 14.4 5 V12.6 Q14.4 13.4 13.6 13.4 H2.4 Q1.6 13.4 1.6 12.6 Z" fill="#8ea3b5"/></svg>
<div class="t" style="top:174.39px;font-size:6.36px;color:#cccccc;letter-spacing:0.17px;left:249.30px;-webkit-text-stroke:0.15px;">sign-up</div>
<svg class="a" style="left:235.00px;top:186.47px;" width="7.4" height="7.4" viewBox="0 0 16 16"><rect x="1.6" y="1.8" width="12.8" height="12.4" rx="0.8" fill="#f2c52e"/><path d="M7.2 8.4 V11.4 Q7.2 12.4 6.2 12.4 M11.6 8.8 Q9.6 8 9.6 9.4 Q9.6 10.2 10.6 10.5 Q11.8 10.9 11.6 11.8 Q11.2 12.8 9.4 12.1" fill="none" stroke="#6b5a10" stroke-width="0.9"/></svg>
<div class="t" style="top:185.16px;font-size:6.36px;color:#cccccc;letter-spacing:0.17px;left:245.40px;-webkit-text-stroke:0.15px;">app.js</div>
<svg class="a" style="left:234.80px;top:197.03px;" width="7.8" height="7.8" viewBox="0 0 16 16"><path d="M5.8 2.2 Q3.6 2.2 3.6 4.2 V6 Q3.6 8 1.4 8 Q3.6 8 3.6 10 V11.8 Q3.6 13.8 5.8 13.8 M10.2 2.2 Q12.4 2.2 12.4 4.2 V6 Q12.4 8 14.6 8 Q12.4 8 12.4 10 V11.8 Q12.4 13.8 10.2 13.8" fill="none" stroke="#f2b53f" stroke-width="2" stroke-linecap="round" stroke-linejoin="round"/><circle cx="6.6" cy="10.6" r="0.95" fill="#f2b53f"/><circle cx="9.4" cy="10.6" r="0.95" fill="#f2b53f"/></svg>
<div class="t" style="top:195.94px;font-size:6.36px;color:#cccccc;letter-spacing:0.17px;left:245.40px;-webkit-text-stroke:0.15px;">app.json</div>
<svg class="a" style="left:234.30px;top:207.30px;" width="8.8" height="8.8" viewBox="0 0 16 16"><path d="M3.2 2 H13.6 L13 4.6 H6.4 L6 6.4 H12.6 L11.6 11.8 L7.6 13.4 L3.4 11.8 L3.8 9.6 H6 L5.8 10.4 L7.8 11.2 L9.8 10.4 L10.2 8.6 H2.6 L3.6 4.2 Z" fill="#3f9ef0" transform="translate(-0.3 0.3)"/></svg>
<div class="t" style="top:206.70px;font-size:6.36px;color:#cccccc;letter-spacing:0.17px;left:245.40px;-webkit-text-stroke:0.15px;">app.wxss</div>
<svg class="a" style="left:235.00px;top:218.78px;" width="7.4" height="7.4" viewBox="0 0 16 16"><rect x="1.6" y="1.8" width="12.8" height="12.4" rx="0.8" fill="#f2c52e"/><path d="M7.2 8.4 V11.4 Q7.2 12.4 6.2 12.4 M11.6 8.8 Q9.6 8 9.6 9.4 Q9.6 10.2 10.6 10.5 Q11.8 10.9 11.6 11.8 Q11.2 12.8 9.4 12.1" fill="none" stroke="#6b5a10" stroke-width="0.9"/></svg>
<div class="t" style="top:217.47px;font-size:6.36px;color:#cccccc;letter-spacing:0.17px;left:245.40px;-webkit-text-stroke:0.15px;">envList.js</div>
<svg class="a" style="left:234.80px;top:229.34px;" width="7.8" height="7.8" viewBox="0 0 16 16"><path d="M8 1.6 L13.6 4.8 V11.2 L8 14.4 L2.4 11.2 V4.8 Z" fill="none" stroke="#76a84a" stroke-width="1.5" stroke-linejoin="round"/><path d="M6 10.2 Q8 11.4 10 10 Q10.6 8.6 8 8.2 Q5.8 7.6 6.6 6.2 Q8 5 10 6" fill="none" stroke="#76a84a" stroke-width="1.1"/></svg>
<div class="t" style="top:228.25px;font-size:6.36px;color:#cccccc;letter-spacing:0.17px;left:245.40px;-webkit-text-stroke:0.15px;">package-lock.json</div>
<svg class="a" style="left:234.80px;top:240.11px;" width="7.8" height="7.8" viewBox="0 0 16 16"><path d="M5.8 2.2 Q3.6 2.2 3.6 4.2 V6 Q3.6 8 1.4 8 Q3.6 8 3.6 10 V11.8 Q3.6 13.8 5.8 13.8 M10.2 2.2 Q12.4 2.2 12.4 4.2 V6 Q12.4 8 14.6 8 Q12.4 8 12.4 10 V11.8 Q12.4 13.8 10.2 13.8" fill="none" stroke="#f2b53f" stroke-width="2" stroke-linecap="round" stroke-linejoin="round"/><circle cx="6.6" cy="10.6" r="0.95" fill="#f2b53f"/><circle cx="9.4" cy="10.6" r="0.95" fill="#f2b53f"/></svg>
<div class="t" style="top:239.01px;font-size:6.36px;color:#cccccc;letter-spacing:0.17px;left:245.40px;-webkit-text-stroke:0.15px;">sitemap.json</div>
<svg class="a" style="left:231.00px;top:250.98px;" width="7.6" height="7.6" viewBox="0 0 16 16"><circle cx="8" cy="8" r="6.4" fill="#4b58c8"/><path d="M8 3.6 L11.8 5.8 V10.2 L8 12.4 L4.2 10.2 V5.8 Z" fill="none" stroke="#c9cdf6" stroke-width="1.1"/><circle cx="8" cy="8" r="1.4" fill="#c9cdf6"/></svg>
<div class="t" style="top:249.78px;font-size:6.36px;color:#cccccc;letter-spacing:0.17px;left:241.50px;-webkit-text-stroke:0.15px;">.eslintrc.js</div>
<svg class="a" style="left:231.10px;top:261.85px;" width="7.4" height="7.4" viewBox="0 0 16 16"><rect x="2" y="2" width="12" height="12" rx="1" fill="#c6cc2e"/><path d="M8 3.4 V5 M8 6.2 V7.8 M8 9 V10.6 M8 11.6 V12.8" stroke="#fafad0" stroke-width="1.8"/></svg>
<div class="t" style="top:260.55px;font-size:6.36px;color:#cccccc;letter-spacing:0.17px;left:241.50px;-webkit-text-stroke:0.15px;">miniprogram.zip</div>
<svg class="a" style="left:230.90px;top:272.43px;" width="7.8" height="7.8" viewBox="0 0 16 16"><path d="M8 1.6 L13.6 4.8 V11.2 L8 14.4 L2.4 11.2 V4.8 Z" fill="none" stroke="#76a84a" stroke-width="1.5" stroke-linejoin="round"/><path d="M6 10.2 Q8 11.4 10 10 Q10.6 8.6 8 8.2 Q5.8 7.6 6.6 6.2 Q8 5 10 6" fill="none" stroke="#76a84a" stroke-width="1.1"/></svg>
<div class="t" style="top:271.32px;font-size:6.36px;color:#cccccc;letter-spacing:0.17px;left:241.50px;-webkit-text-stroke:0.15px;">package-lock.json</div>
<svg class="a" style="left:230.90px;top:283.20px;" width="7.8" height="7.8" viewBox="0 0 16 16"><path d="M5.8 2.2 Q3.6 2.2 3.6 4.2 V6 Q3.6 8 1.4 8 Q3.6 8 3.6 10 V11.8 Q3.6 13.8 5.8 13.8 M10.2 2.2 Q12.4 2.2 12.4 4.2 V6 Q12.4 8 14.6 8 Q12.4 8 12.4 10 V11.8 Q12.4 13.8 10.2 13.8" fill="none" stroke="#f2b53f" stroke-width="2" stroke-linecap="round" stroke-linejoin="round"/><circle cx="6.6" cy="10.6" r="0.95" fill="#f2b53f"/><circle cx="9.4" cy="10.6" r="0.95" fill="#f2b53f"/></svg>
<div class="t" style="top:282.10px;font-size:6.36px;color:#cccccc;letter-spacing:0.17px;left:241.50px;-webkit-text-stroke:0.15px;">project.config.json</div>
<svg class="a" style="left:230.90px;top:293.97px;" width="7.8" height="7.8" viewBox="0 0 16 16"><path d="M5.8 2.2 Q3.6 2.2 3.6 4.2 V6 Q3.6 8 1.4 8 Q3.6 8 3.6 10 V11.8 Q3.6 13.8 5.8 13.8 M10.2 2.2 Q12.4 2.2 12.4 4.2 V6 Q12.4 8 14.6 8 Q12.4 8 12.4 10 V11.8 Q12.4 13.8 10.2 13.8" fill="none" stroke="#f2b53f" stroke-width="2" stroke-linecap="round" stroke-linejoin="round"/><circle cx="6.6" cy="10.6" r="0.95" fill="#f2b53f"/><circle cx="9.4" cy="10.6" r="0.95" fill="#f2b53f"/></svg>
<div class="t" style="top:292.87px;font-size:6.36px;color:#cccccc;letter-spacing:0.17px;left:241.50px;-webkit-text-stroke:0.15px;">project.private.config.js...</div>
<svg class="a" style="left:231.00px;top:304.83px;" width="7.6" height="7.6" viewBox="0 0 16 16"><circle cx="8" cy="8" r="6.6" fill="#43a8f2"/><path d="M8 7.2 V11.6" stroke="#fff" stroke-width="1.6" stroke-linecap="round"/><circle cx="8" cy="4.6" r="1" fill="#fff"/></svg>
<div class="t" style="top:303.63px;font-size:6.36px;color:#cccccc;letter-spacing:0.17px;left:241.50px;-webkit-text-stroke:0.15px;">README.md</div>
<svg class="a" style="left:231.00px;top:315.60px;" width="7.6" height="7.6" viewBox="0 0 16 16"><rect x="1.8" y="2.6" width="12.4" height="10.8" rx="1.2" fill="none" stroke="#e0703a" stroke-width="1.5"/><path d="M4.4 6 L7 8 L4.4 10 M8.4 10.6 H11.4" fill="none" stroke="#e0703a" stroke-width="1.2"/></svg>
<div class="t" style="top:314.40px;font-size:6.36px;color:#cccccc;letter-spacing:0.17px;left:241.50px;-webkit-text-stroke:0.15px;">uploadCloudFunction....</div>
<svg class="a" style="left:368.70px;top:62.10px;" width="6.6" height="6.6" viewBox="0 0 16 16"><path d="M1.6 3 H14.4 M1.6 6.4 H14.4 M1.6 9.8 H14.4 M1.6 13.2 H14.4" stroke="#7a7a7a" stroke-width="1.6"/></svg>
<svg class="a" style="left:382.90px;top:61.70px;" width="7.4" height="7.4" viewBox="0 0 16 16"><path d="M4 2.4 H12 V13.6 L8 10.4 L4 13.6 Z" fill="none" stroke="#b4b4b4" stroke-width="1.4" stroke-linejoin="round"/></svg>
<svg class="a" style="left:398.10px;top:62.10px;" width="6.6" height="6.6" viewBox="0 0 16 16"><path d="M14 8 H2.4 M7 3.4 L2.4 8 L7 12.6" fill="none" stroke="#9a9a9a" stroke-width="1.4"/></svg>
<svg class="a" style="left:411.70px;top:62.10px;" width="6.6" height="6.6" viewBox="0 0 16 16"><path d="M2 8 H13.6 M9 3.4 L13.6 8 L9 12.6" fill="none" stroke="#9a9a9a" stroke-width="1.4"/></svg>
<div class="t" style="top:60.30px;font-size:6.36px;color:#a8a8a8;letter-spacing:0.14px;left:427.00px;">miniprogram</div>
<svg class="a" style="left:465.50px;top:63.30px;" width="4.6" height="4.6" viewBox="0 0 16 16"><path d="M5 2 L11 8 L5 14" fill="none" stroke="#a8a8a8" stroke-width="1.8"/></svg>
<svg class="a" style="left:471.40px;top:61.90px;" width="7.2" height="7.2" viewBox="0 0 16 16"><path d="M5.8 2.2 Q3.6 2.2 3.6 4.2 V6 Q3.6 8 1.4 8 Q3.6 8 3.6 10 V11.8 Q3.6 13.8 5.8 13.8 M10.2 2.2 Q12.4 2.2 12.4 4.2 V6 Q12.4 8 14.6 8 Q12.4 8 12.4 10 V11.8 Q12.4 13.8 10.2 13.8" fill="none" stroke="#f2b53f" stroke-width="2" stroke-linecap="round" stroke-linejoin="round"/><circle cx="6.6" cy="10.6" r="0.95" fill="#f2b53f"/><circle cx="9.4" cy="10.6" r="0.95" fill="#f2b53f"/></svg>
<div class="t" style="top:60.30px;font-size:6.36px;color:#cdcdcd;letter-spacing:0.18px;left:482.20px;-webkit-text-stroke:0.1px;">app.json</div>
<svg class="a" style="left:509.30px;top:63.30px;" width="4.6" height="4.6" viewBox="0 0 16 16"><path d="M5 2 L11 8 L5 14" fill="none" stroke="#a8a8a8" stroke-width="1.8"/></svg>
<svg class="a" style="left:515.90px;top:61.90px;" width="7" height="7" viewBox="0 0 16 16"><path d="M3.6 3 H1.4 V13 H3.6 M12.4 3 H14.6 V13 H12.4" fill="none" stroke="#a8a8a8" stroke-width="1.3"/></svg>
<div class="t" style="top:60.30px;font-size:6.36px;color:#a8a8a8;letter-spacing:0.14px;left:526.40px;">pages</div>
<svg class="a" style="left:546.50px;top:63.30px;" width="4.6" height="4.6" viewBox="0 0 16 16"><path d="M5 2 L11 8 L5 14" fill="none" stroke="#a8a8a8" stroke-width="1.8"/></svg>
<svg class="a" style="left:552.20px;top:61.60px;" width="7.6" height="7.6" viewBox="0 0 16 16"><rect x="1.6" y="3" width="12.8" height="10" rx="1.4" fill="none" stroke="#a8a8a8" stroke-width="1.4"/><path d="M4.6 8 H11.4" stroke="#a8a8a8" stroke-width="1.2"/></svg>
<div class="t" style="top:60.30px;font-size:6.36px;color:#bcbcbc;left:562.80px;">2</div>
<div class="a" style="left:400.00px;top:117.02px;width:250.00px;height:11.72px;background:#3a3a3a;"></div>
<div class="a" style="left:399.50px;top:81.86px;width:1.00px;height:164.08px;background:#3c3c3c;"></div>
<div class="a" style="left:406.80px;top:93.00px;width:1.00px;height:38.60px;background:#62446b;"></div>
<div class="a" style="left:406.80px;top:93.00px;width:32.00px;height:1.00px;background:#62446b;"></div>
<div class="a" style="left:407.00px;top:152.18px;width:1.00px;height:58.60px;background:#3a3a3a;"></div>
<div class="a" style="left:438.47px;top:82.72px;width:3.73px;height:9.6px;box-sizing:border-box;border:0.5px solid #858585;background:#37433a"></div>
<div class="a" style="left:406.75px;top:129.60px;width:3.73px;height:9.6px;box-sizing:border-box;border:0.5px solid #858585;background:#37433a"></div>
<div class="t" style="top:70.90px;font-size:5.9px;color:#5f5f5f;font-family:'Liberation Mono',monospace;right:262.40px;">1</div>
<div class="t" style="top:70.90px;font-size:5.925px;color:#c8c8c8;font-family:'Liberation Mono',monospace;left:399.90px;-webkit-text-stroke:0.2px;"><span class="b1">{</span></div>
<div class="t" style="top:82.62px;font-size:5.9px;color:#5f5f5f;font-family:'Liberation Mono',monospace;right:262.40px;">2</div>
<div class="t" style="top:82.62px;font-size:5.925px;color:#c8c8c8;font-family:'Liberation Mono',monospace;left:399.90px;-webkit-text-stroke:0.2px;">  <span class="q">"</span><span class="k">pages</span><span class="q">"</span><span class="c">: </span><span class="b2">[</span></div>
<div class="t" style="top:94.34px;font-size:5.9px;color:#5f5f5f;font-family:'Liberation Mono',monospace;right:262.40px;">3</div>
<div class="t" style="top:94.34px;font-size:5.925px;color:#c8c8c8;font-family:'Liberation Mono',monospace;left:399.90px;-webkit-text-stroke:0.2px;">    <span class="q">"</span><span class="s">page-module/sign-up/example/index/index</span><span class="q">"</span><span class="p">,</span></div>
<div class="t" style="top:106.06px;font-size:5.9px;color:#5f5f5f;font-family:'Liberation Mono',monospace;right:262.40px;">4</div>
<div class="t" style="top:106.06px;font-size:5.925px;color:#c8c8c8;font-family:'Liberation Mono',monospace;left:399.90px;-webkit-text-stroke:0.2px;">    <span class="q">"</span><span class="s">page-module/invite-new-user_1/example/index/index</span><span class="q">"</span><span class="p">,</span></div>
<div class="t" style="top:117.78px;font-size:5.9px;color:#d0d0d0;font-family:'Liberation Mono',monospace;right:262.40px;">5</div>
<div class="t" style="top:117.78px;font-size:5.925px;color:#c8c8c8;font-family:'Liberation Mono',monospace;left:399.90px;-webkit-text-stroke:0.2px;">    <span class="q">"</span><span class="s">page-module/invite-new-user_1/example/inviteAccept/index</span><span class="q">"</span></div>
<div class="t" style="top:129.50px;font-size:5.9px;color:#5f5f5f;font-family:'Liberation Mono',monospace;right:262.40px;">6</div>
<div class="t" style="top:129.50px;font-size:5.925px;color:#c8c8c8;font-family:'Liberation Mono',monospace;left:399.90px;-webkit-text-stroke:0.2px;">  <span class="b2">]</span><span class="p">,</span></div>
<div class="t" style="top:141.22px;font-size:5.9px;color:#5f5f5f;font-family:'Liberation Mono',monospace;right:262.40px;">7</div>
<div class="t" style="top:141.22px;font-size:5.925px;color:#c8c8c8;font-family:'Liberation Mono',monospace;left:399.90px;-webkit-text-stroke:0.2px;">  <span class="q">"</span><span class="k">window</span><span class="q">"</span><span class="c">: </span><span class="b2">{</span></div>
<div class="t" style="top:152.94px;font-size:5.9px;color:#5f5f5f;font-family:'Liberation Mono',monospace;right:262.40px;">8</div>
<div class="t" style="top:152.94px;font-size:5.925px;color:#c8c8c8;font-family:'Liberation Mono',monospace;left:399.90px;-webkit-text-stroke:0.2px;">    <span class="q">"</span><span class="k2">backgroundColor</span><span class="q">"</span><span class="c">: </span><span class="q">"</span><span class="s">#F6F6F6</span><span class="q">"</span><span class="p">,</span></div>
<div class="t" style="top:164.66px;font-size:5.9px;color:#5f5f5f;font-family:'Liberation Mono',monospace;right:262.40px;">9</div>
<div class="t" style="top:164.66px;font-size:5.925px;color:#c8c8c8;font-family:'Liberation Mono',monospace;left:399.90px;-webkit-text-stroke:0.2px;">    <span class="q">"</span><span class="k2">backgroundTextStyle</span><span class="q">"</span><span class="c">: </span><span class="q">"</span><span class="s">light</span><span class="q">"</span><span class="p">,</span></div>
<div class="t" style="top:176.38px;font-size:5.9px;color:#5f5f5f;font-family:'Liberation Mono',monospace;right:262.40px;">10</div>
<div class="t" style="top:176.38px;font-size:5.925px;color:#c8c8c8;font-family:'Liberation Mono',monospace;left:399.90px;-webkit-text-stroke:0.2px;">    <span class="q">"</span><span class="k2">navigationBarBackgroundColor</span><span class="q">"</span><span class="c">: </span><span class="q">"</span><span class="s">#F6F6F6</span><span class="q">"</span><span class="p">,</span></div>
<div class="t" style="top:188.10px;font-size:5.9px;color:#5f5f5f;font-family:'Liberation Mono',monospace;right:262.40px;">11</div>
<div class="t" style="top:188.10px;font-size:5.925px;color:#c8c8c8;font-family:'Liberation Mono',monospace;left:399.90px;-webkit-text-stroke:0.2px;">    <span class="q">"</span><span class="k2">navigationBarTitleText</span><span class="q">"</span><span class="c">: </span><span class="q">"</span><span class="s">云开发 QuickStart</span><span class="q">"</span><span class="p">,</span></div>
<div class="t" style="top:199.82px;font-size:5.9px;color:#5f5f5f;font-family:'Liberation Mono',monospace;right:262.40px;">12</div>
<div class="t" style="top:199.82px;font-size:5.925px;color:#c8c8c8;font-family:'Liberation Mono',monospace;left:399.90px;-webkit-text-stroke:0.2px;">    <span class="q">"</span><span class="k2">navigationBarTextStyle</span><span class="q">"</span><span class="c">: </span><span class="q">"</span><span class="s">black</span><span class="q">"</span></div>
<div class="t" style="top:211.54px;font-size:5.9px;color:#5f5f5f;font-family:'Liberation Mono',monospace;right:262.40px;">13</div>
<div class="t" style="top:211.54px;font-size:5.925px;color:#c8c8c8;font-family:'Liberation Mono',monospace;left:399.90px;-webkit-text-stroke:0.2px;">  <span class="b2">}</span><span class="p">,</span></div>
<div class="t" style="top:223.26px;font-size:5.9px;color:#5f5f5f;font-family:'Liberation Mono',monospace;right:262.40px;">14</div>
<div class="t" style="top:223.26px;font-size:5.925px;color:#c8c8c8;font-family:'Liberation Mono',monospace;left:399.90px;-webkit-text-stroke:0.2px;">  <span class="q">"</span><span class="k">sitemapLocation</span><span class="q">"</span><span class="c">: </span><span class="q">"</span><span class="s">sitemap.json</span><span class="q">"</span><span class="p">,</span></div>
<div class="t" style="top:234.98px;font-size:5.9px;color:#5f5f5f;font-family:'Liberation Mono',monospace;right:262.40px;">15</div>
<div class="t" style="top:234.98px;font-size:5.925px;color:#c8c8c8;font-family:'Liberation Mono',monospace;left:399.90px;-webkit-text-stroke:0.2px;">  <span class="q">"</span><span class="k">style</span><span class="q">"</span><span class="c">: </span><span class="q">"</span><span class="s">v2</span><span class="q">"</span></div>
<svg class="a" style="left:391.10px;top:73.10px;" width="5.4" height="5.4" viewBox="0 0 16 16"><path d="M2.4 5 L8 10.6 L13.6 5" fill="none" stroke="#b4b4b4" stroke-width="1.7"/></svg>
<svg class="a" style="left:391.10px;top:84.82px;" width="5.4" height="5.4" viewBox="0 0 16 16"><path d="M2.4 5 L8 10.6 L13.6 5" fill="none" stroke="#b4b4b4" stroke-width="1.7"/></svg>
<svg class="a" style="left:391.10px;top:143.42px;" width="5.4" height="5.4" viewBox="0 0 16 16"><path d="M2.4 5 L8 10.6 L13.6 5" fill="none" stroke="#b4b4b4" stroke-width="1.7"/></svg>
<div class="a" style="left:306.0px;top:166.0px;width:98.4px;height:225.8px;border-radius:3.2px;background:#c6c1ca;box-shadow:0 2px 8px rgba(0,0,0,0.45),0 0 0 0.4px rgba(0,0,0,0.35)">
<div class="t" style="top:3.47px;font-size:6.3px;color:#1f1f1f;letter-spacing:0.1px;left:7.20px;-webkit-text-stroke:0.12px;">新建文件</div>
<div class="t" style="top:14.23px;font-size:6.3px;color:#1f1f1f;letter-spacing:0.1px;left:7.20px;-webkit-text-stroke:0.12px;">新建 Page</div>
<div class="t" style="top:24.98px;font-size:6.3px;color:#1f1f1f;letter-spacing:0.1px;left:7.20px;-webkit-text-stroke:0.12px;">新建 Component</div>
<div class="t" style="top:35.73px;font-size:6.3px;color:#1f1f1f;letter-spacing:0.1px;left:7.20px;-webkit-text-stroke:0.12px;">新建文件夹</div>
<div class="a" style="left:7.00px;top:47.80px;width:84.00px;height:1.00px;background:#b5b0b9;"></div>
<div class="t" style="top:51.88px;font-size:6.3px;color:#1f1f1f;letter-spacing:0.1px;left:7.20px;-webkit-text-stroke:0.12px;">生成 darkmode 适配代码</div>
<div class="a" style="left:2.40px;top:61.60px;width:93.60px;height:11.05px;background:#1c6fe3;border-radius:2.2px;"></div>
<div class="t" style="top:62.62px;font-size:6.3px;color:#fff;letter-spacing:0.1px;left:7.20px;-webkit-text-stroke:0.12px;">配置单页模板</div>
<div class="a" style="left:7.00px;top:74.70px;width:84.00px;height:1.00px;background:#b5b0b9;"></div>
<div class="t" style="top:78.78px;font-size:6.3px;color:#1f1f1f;letter-spacing:0.1px;left:7.20px;-webkit-text-stroke:0.12px;">在内建终端中打开</div>
<div class="a" style="left:7.00px;top:90.85px;width:84.00px;height:1.00px;background:#b5b0b9;"></div>
<div class="t" style="top:94.93px;font-size:6.3px;color:#1f1f1f;letter-spacing:0.1px;left:7.20px;-webkit-text-stroke:0.12px;">在文件夹中查找...</div>
<div class="a" style="left:7.00px;top:107.00px;width:84.00px;height:1.00px;background:#b5b0b9;"></div>
<div class="t" style="top:111.08px;font-size:6.3px;color:#1f1f1f;letter-spacing:0.27px;left:7.20px;-webkit-text-stroke:0.12px;">剪切 [⌘X]</div>
<div class="t" style="top:121.83px;font-size:6.3px;color:#1f1f1f;letter-spacing:0.27px;left:7.20px;-webkit-text-stroke:0.12px;">复制 [⌘C]</div>
<div class="t" style="top:132.58px;font-size:6.3px;color:#9a959e;letter-spacing:0.27px;left:7.20px;-webkit-text-stroke:0.12px;">粘贴 [⌘V]</div>
<div class="a" style="left:7.00px;top:144.65px;width:84.00px;height:1.00px;background:#b5b0b9;"></div>
<div class="t" style="top:148.73px;font-size:6.3px;color:#1f1f1f;letter-spacing:0.27px;left:7.20px;-webkit-text-stroke:0.12px;">复制路径 [⌥⌘C]</div>
<div class="t" style="top:159.48px;font-size:6.3px;color:#1f1f1f;letter-spacing:0.27px;left:7.20px;-webkit-text-stroke:0.12px;">复制相对路径 [⇧⌥⌘C]</div>
<div class="a" style="left:7.00px;top:171.55px;width:84.00px;height:1.00px;background:#b5b0b9;"></div>
<div class="t" style="top:175.63px;font-size:6.3px;color:#1f1f1f;letter-spacing:0.27px;left:7.20px;-webkit-text-stroke:0.12px;">重命名 [Enter]</div>
<div class="t" style="top:186.38px;font-size:6.3px;color:#1f1f1f;letter-spacing:0.27px;left:7.20px;-webkit-text-stroke:0.12px;">删除 [⌘Backspace]</div>
<div class="a" style="left:7.00px;top:198.45px;width:84.00px;height:1.00px;background:#b5b0b9;"></div>
<svg class="a" style="left:6.70px;top:203.43px;" width="7.6" height="7.6" viewBox="0 0 16 16"><rect x="1" y="1.4" width="14" height="13.2" rx="2.6" fill="#3b8af0"/><path d="M8.6 1.4 H12.4 Q15 1.4 15 4 V12 Q15 14.6 12.4 14.6 H8 Q9 11 8.2 8.6 H6.6 Q6.8 4.6 8.6 1.4 Z" fill="#dff0ff"/><path d="M4.4 5 V6.6 M11.4 5 V6.6 M4 10.4 Q8 13 12 10.4" fill="none" stroke="#173a6a" stroke-width="0.9"/></svg>
<div class="t" style="top:202.53px;font-size:6.3px;color:#1f1f1f;letter-spacing:0.27px;left:17.80px;-webkit-text-stroke:0.12px;">在 “访达” 中显示 [⌥⌘R]</div>
<svg class="a" style="left:6.70px;top:214.18px;" width="7.6" height="7.6" viewBox="0 0 16 16"><rect x="1" y="1.4" width="14" height="13.2" rx="2.6" fill="#161616"/><path d="M3.6 5 L5.6 6.6 L3.6 8.2" fill="none" stroke="#ddd" stroke-width="0.9"/></svg>
<div class="t" style="top:213.28px;font-size:6.3px;color:#1f1f1f;letter-spacing:0.1px;left:17.80px;-webkit-text-stroke:0.12px;">在外部终端窗口中打开</div>
</div>
</div>
</body>
</html>
